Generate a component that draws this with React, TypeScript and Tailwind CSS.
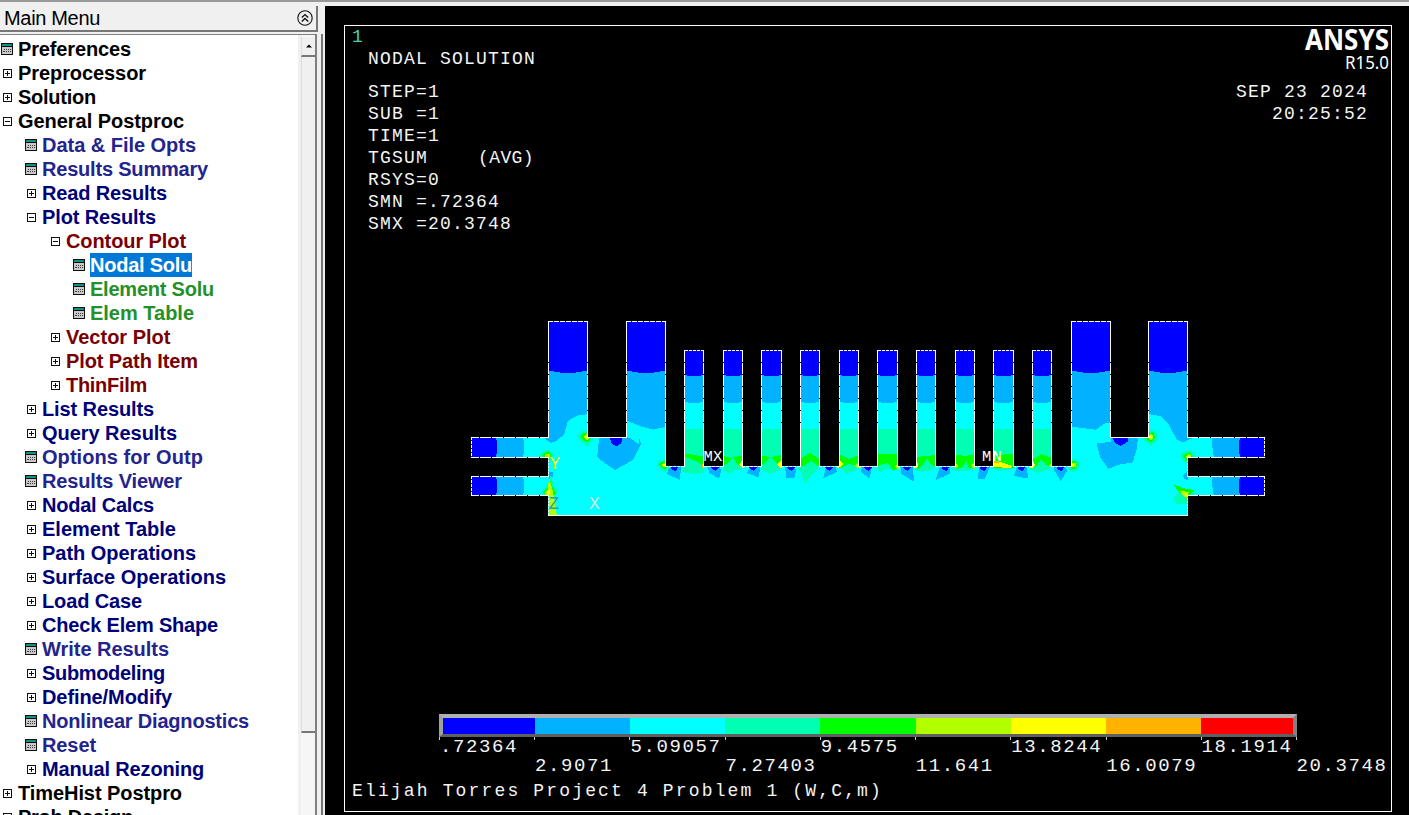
import React from "react";

type Kind = "page" | "plus" | "minus";
type Row = { d: number; k: Kind; t: string; c: string; w: number; sel?: boolean };

const BLACK = "text-black";
const NAVY = "text-[#000078]";
const INDIGO = "text-[#24248c]";
const MAROON = "text-[#780000]";
const GREEN = "text-[#24902a]";

const rows: Row[] = [
  { d: 0, k: "page", t: "Preferences", c: BLACK, w: 113 },
  { d: 0, k: "plus", t: "Preprocessor", c: BLACK, w: 128 },
  { d: 0, k: "plus", t: "Solution", c: BLACK, w: 78 },
  { d: 0, k: "minus", t: "General Postproc", c: BLACK, w: 166 },
  { d: 1, k: "page", t: "Data & File Opts", c: INDIGO, w: 154 },
  { d: 1, k: "page", t: "Results Summary", c: INDIGO, w: 166 },
  { d: 1, k: "plus", t: "Read Results", c: NAVY, w: 125 },
  { d: 1, k: "minus", t: "Plot Results", c: NAVY, w: 114 },
  { d: 2, k: "minus", t: "Contour Plot", c: MAROON, w: 120 },
  { d: 3, k: "page", t: "Nodal Solu", c: "text-white", w: 102, sel: true },
  { d: 3, k: "page", t: "Element Solu", c: GREEN, w: 124 },
  { d: 3, k: "page", t: "Elem Table", c: GREEN, w: 104 },
  { d: 2, k: "plus", t: "Vector Plot", c: MAROON, w: 104.5 },
  { d: 2, k: "plus", t: "Plot Path Item", c: MAROON, w: 132 },
  { d: 2, k: "plus", t: "ThinFilm", c: MAROON, w: 81 },
  { d: 1, k: "plus", t: "List Results", c: NAVY, w: 112 },
  { d: 1, k: "plus", t: "Query Results", c: NAVY, w: 135 },
  { d: 1, k: "page", t: "Options for Outp", c: INDIGO, w: 161 },
  { d: 1, k: "page", t: "Results Viewer", c: INDIGO, w: 140 },
  { d: 1, k: "plus", t: "Nodal Calcs", c: NAVY, w: 112 },
  { d: 1, k: "plus", t: "Element Table", c: NAVY, w: 134 },
  { d: 1, k: "plus", t: "Path Operations", c: NAVY, w: 154 },
  { d: 1, k: "plus", t: "Surface Operations", c: NAVY, w: 184 },
  { d: 1, k: "plus", t: "Load Case", c: NAVY, w: 100 },
  { d: 1, k: "plus", t: "Check Elem Shape", c: NAVY, w: 176 },
  { d: 1, k: "page", t: "Write Results", c: INDIGO, w: 127 },
  { d: 1, k: "plus", t: "Submodeling", c: NAVY, w: 123 },
  { d: 1, k: "plus", t: "Define/Modify", c: NAVY, w: 130 },
  { d: 1, k: "page", t: "Nonlinear Diagnostics", c: INDIGO, w: 207 },
  { d: 1, k: "page", t: "Reset", c: INDIGO, w: 54 },
  { d: 1, k: "plus", t: "Manual Rezoning", c: NAVY, w: 162 },
  { d: 0, k: "plus", t: "TimeHist Postpro", c: BLACK, w: 164 },
  { d: 0, k: "plus", t: "Prob Design", c: BLACK, w: 115 },
];

function NodeIcon({ kind }: { kind: Kind }) {
  if (kind === "page") {
    return (
      <svg width="12" height="12" viewBox="0 0 12 12" shapeRendering="crispEdges">
        <rect width="12" height="12" fill="#101010" />
        <rect x="1" y="1" width="10" height="2" fill="#109080" />
        <rect x="1" y="4" width="10" height="7" fill="#c8c8c8" />
        <path d="M3 6h1M5 6h1M7 6h1M9 6h1M2 8h2M5 8h1M7 8h1M9 8h1" transform="translate(0 .5)" stroke="#404040" />
      </svg>
    );
  }
  return (
    <svg width="9" height="9" viewBox="0 0 9 9" shapeRendering="crispEdges" className="ml-[2px]">
      <rect x=".5" y=".5" width="8" height="8" fill="#fff" stroke="#101010" />
      <path d={kind === "plus" ? "M2 4.5h5M4.5 2v5" : "M2 4.5h5"} stroke="#101010" />
    </svg>
  );
}

/* Text fitted to a known pixel width by spreading the difference over its letters. */
function FitText({ text, width, className }: { text: string; width: number; className: string }) {
  const ref = React.useRef<HTMLSpanElement>(null);
  const [space, setSpace] = React.useState(0);
  React.useLayoutEffect(() => {
    if (ref.current) {
      const natural = ref.current.getBoundingClientRect().width;
      setSpace((width - natural) / text.length);
    }
  }, [text, width]);
  return (
    <span ref={ref} className={className} style={{ letterSpacing: `${space}px` }}>
      {text}
    </span>
  );
}

const indent = ["pl-0", "pl-6", "pl-12", "pl-[72px]"];

function Sidebar() {
  return (
    <aside className="flex h-full w-[325px] shrink-0 flex-col bg-[#f0f0f0]">
      <div className="mr-[7px] flex h-[26px] shrink-0 items-center justify-between border-r-2 border-b-2 border-[#777] pr-[3px] pl-[4px]">
        <FitText text="Main Menu" width={96} className="text-[20px] leading-none whitespace-pre text-black" />
        <svg width="16" height="16" viewBox="0 0 16 16" fill="none" stroke="#111" strokeWidth="1.1">
          <circle cx="8" cy="8" r="7.2" />
          <path d="M4.8 7.6 8 4.6l3.2 3M4.8 11.4 8 8.4l3.2 3" strokeWidth="1.4" />
        </svg>
      </div>
      <div className="flex min-h-0 flex-1 pt-[2px]">
        <div className="flex min-h-0 w-[317px] shrink-0 overflow-hidden border-t border-r-2 border-[#808080] bg-white">
          <ul className="w-[298px] shrink-0 pt-[2px]">
            {rows.map((r) => (
              <li key={r.t} className={`flex h-6 items-center ${indent[r.d]}`}>
                <span className="flex w-[18px] shrink-0 items-center pl-px">
                  <NodeIcon kind={r.k} />
                </span>
                <span className={`flex h-6 items-center ${r.sel ? "bg-[#0078d7]" : ""}`}>
                  <FitText text={r.t} width={r.w} className={`text-[20px] leading-6 font-bold whitespace-pre ${r.c}`} />
                </span>
              </li>
            ))}
          </ul>
          <div className="flex w-[17px] shrink-0 flex-col border-l-[3px] border-[#f0f0f0] bg-[#f6f6f6] pt-[2px]">
            <div className="flex h-5 shrink-0 items-center justify-center border-b-2 border-l border-b-[#777] border-l-[#ddd] bg-[#f0f0f0]">
              <svg width="6" height="4" viewBox="0 0 6 4">
                <path d="M0 3.5 3 .5l3 3z" fill="#000" />
              </svg>
            </div>
            <div className="h-[676px] shrink-0 border-b-2 border-l border-b-[#777] border-l-[#ddd] bg-[#f0f0f0]" />
          </div>
        </div>
        <div className="ml-[4px] w-[4px] border-l-2 border-[#777] bg-[#f0f0f0]" />
      </div>
    </aside>
  );
}

const B = "#0000ff";
const L = "#00b2ff";
const C = "#00ffff";
const A = "#00ffb2";
const G = "#00ff00";
const YG = "#b2ff00";
const Y = "#ffff00";
const O = "#ffb200";
const R = "#ff0000";

const smallFins: [number, number][] = [
  [684.5, 703.5], [723.5, 742.5], [761.5, 781.5], [800.5, 819.5], [839.5, 858.5],
  [877.5, 897.5], [916.5, 935.5], [955.5, 974.5], [993.5, 1013.5], [1032.5, 1051.5],
];
const bigFins: [number, number][] = [
  [548.5, 587.5], [626.5, 665.5], [1071.5, 1110.5], [1148.5, 1187.5],
];

const outline =
  "M548.5 321.5H587.5V437.5H626.5V321.5H665.5V466.5" +
  smallFins.map(([a, b]) => `H${a}V350.5H${b}V466.5`).join("") +
  "H1071.5V321.5H1110.5V437.5H1148.5V321.5H1187.5V437.5H1264.5V457.5H1187.5V476.5H1264.5V495.5H1187.5V515.5H548.5V495.5H471.5V476.5H548.5V457.5H471.5V437.5H548.5Z";

const coldPockets = [
  "669,467 667,474 680,480 681,467",
  "708,467 709,473 719,478.5 721,471 720,467",
  "750,467 747,473 759,477.5 760,467",
  "785,467 786.5,477.5 794,478.5 796,471 795,467",
  "826,467 823,478.5 837,472 836,467",
  "862,467 861,472 869.5,478.5 872,467",
  "901,467 901.5,474 914.5,482 912.5,467",
  "940,467 935.5,480 950.5,473.5 950,467",
  "979,467 978,479 985,478.5 990,467",
  "1017,467 1014,476 1028,478.5 1027,467",
  "1054,467 1054,470 1060.7,481 1067,471 1066,467",
];
const coldCores = [674.5, 715, 753, 791, 829, 868, 907, 945.5, 983.5, 1021.5, 1060.5];

const finFeet = [
  "684,464 703,464 704,473 692,474 682,472",
  "723,464 743,464 742,469 735,470 730,474 723,470",
  "761,464 782,464 780,470 770,474 762,470",
  "800,464 820,464 818,468 811,476 805,484 801,472 798,470",
  "839,464 859,464 856,470 847,474 841,469",
  "877,464 898,464 895,471 888,468 879,473",
  "916,464 936,464 932,470 923,472 914,470",
  "955,464 975,464 973,470 962,471 953,470",
  "993,464 1014,464 1013,469 1000,471 993,468",
  "1032,464 1052,464 1049,469 1039,473 1030,470",
];
const finGreens = [
  "684,453.5 703.5,456.5 703.5,467 700,463 684,456",
  "723,456 731,458 742.5,455 742.5,467 738,465 733,457.5 726,464 723,466",
  "761,456 772,457 781.5,455 781.5,467 776,463 770,457 764,464 761,466",
  "800,459 810,453 820,459 820,467 811,461 804,466 800,467",
  "839,454 849,459 859,455 859,467 849,464 843,467 839,468",
  "877,453.5 898,454 898,468 893,471 888,463 877,466",
  "916,457 926,456 936,455 936,467 930,464 927,458 923,465 918,469 916,468",
  "955,455 966,456 975,454 975,467 969,468 966,461 963,467 955,469",
  "993,455 1014,454 1014,468 993,468",
  "1032,460 1041,454 1052,458 1052,467 1045,464 1041,459 1037,466 1032,468",
];

/* Stress concentration at a re-entrant corner, drawn as nested contour bands. */
function Hot({ x, y, s = 1, top = Y }: { x: number; y: number; s?: number; top?: string }) {
  return (
    <g transform={`translate(${x} ${y}) scale(${s})`}>
      <polygon points="-9,-1 -4,-6 3,-7 8,-2 7,3 1,9 -5,5" fill={A} />
      <polygon points="-6,-1 -2,-4 3,-5 5,0 2,5 -2,4" fill={G} />
      <polygon points="-3,0 0,-3 3,-2 3,2 0,3" fill={YG} />
      <rect x="-1.5" y="-1.5" width="3" height="3" fill={top} />
    </g>
  );
}

function ContourPlot() {
  return (
    <svg width="820" height="215" viewBox="460 310 820 215" shapeRendering="crispEdges" className="block">
      <defs>
        <clipPath id="body">
          <path d={outline} />
        </clipPath>
      </defs>
      <path d={outline} fill={C} />
      <g clipPath="url(#body)">
        <polygon fill={L} points="548,321 588,321 588,414 577,415.7 567.7,421 564.3,434 556.7,441 551,443 544,438 548,437" />
        <polygon fill={L} points="626,321 666,321 666,426.7 653.3,429.7 641.7,426.7 626,420.5" />
        <polygon fill={L} points="1071,321 1111,321 1111,422 1104,423.7 1096,429.7 1071,426.7" />
        <polygon fill={L} points="1148,321 1188,321 1188,437 1191.7,438.5 1183.3,442.3 1177.3,440 1173.3,433.3 1168.3,424 1160,416 1148,414" />
        {bigFins.map(([a, b]) => (
          <path key={a} d={`M${a} 321H${b}V370.5Q${(a + b) / 2} 375.5 ${a} 370.5Z`} fill={B} />
        ))}
        {smallFins.map(([a, b], i) => (
          <g key={a}>
            <polygon points={finFeet[i]} fill={A} />
            <rect x={a} y="429" width={b - a} height="37.5" fill={A} />
            <path d={`M${a} 350H${b}V402L${b - 5} 402.8H${a + 5}L${a} 402Z`} fill={L} />
            <path d={`M${a} 350H${b}V375L${b - 5} 376H${a + 5}L${a} 375Z`} fill={B} />
            <polygon points={finGreens[i]} fill={G} />
          </g>
        ))}
        {[437, 476].map((y) => (
          <g key={y}>
            <path d={`M471 ${y}H523Q525 ${y + 10} 523 ${y + 21}H471Z`} fill={L} />
            <path d={`M471 ${y}H496Q498 ${y + 10} 496 ${y + 21}H471Z`} fill={B} />
            <path d={`M1265 ${y}H1212Q1212 ${y + 12} 1214 ${y + 21}H1265Z`} fill={L} />
            <path d={`M1265 ${y}H1240Q1238 ${y + 10} 1240 ${y + 21}H1265Z`} fill={B} />
          </g>
        ))}
        <polygon fill={L} points="599,437 598,451 597,457 606,464 615,470 633,460 641,444 639.5,439 638.5,444 630,438 626,437" />
        <polygon fill={B} points="609.7,437 611.7,444 616.7,446 621.3,443.3 622.7,437" />
        <polygon fill={L} points="1096.7,443.3 1111,442 1111,437 1137.7,437 1137.3,447 1132.7,462.3 1120,464.5 1108.3,468.7 1100,457" />
        <polygon fill={B} points="1112.7,437 1114.3,442.3 1120.7,446 1127.7,441.7 1128.7,437" />
        {coldPockets.map((p) => (
          <polygon key={p} points={p} fill={L} />
        ))}
        {coldCores.map((x) => (
          <polygon key={x} points={`${x - 4},467 ${x - 2},470 ${x + 1},471 ${x + 4},467`} fill={B} />
        ))}
        <polygon fill={L} points="548,472 553,472 553,476 549,480" />
        <polygon fill={L} points="1188,471 1183,475 1184,479 1188,480" />

        <Hot x={586} y={437} />
        <Hot x={1150} y={437} />
        <Hot x={547} y={456} s={0.85} top={O} />
        <Hot x={1188} y={457} s={0.9} />
        <Hot x={664} y={465} s={0.85} />
        <Hot x={1073} y={465} s={0.85} />
        <polygon fill={A} points="541,492 548,484 551,475 554,486 558,491 554,499 550,501" />
        <polygon fill={G} points="543,493 548,487 550,480 553,488 556,493 552,497" />
        <polygon fill={YG} points="545,493 548,489 549,477 552,488 554,497 557,516 548,516" />
        <polygon fill={Y} points="547,491 550,489 550,494 547,495" />
        <polygon fill={A} points="1173,484 1188,490 1195,490 1190,504 1178,504 1172,499 1178,493" />
        <polygon fill={G} points="1174,485 1187,489 1194,490 1187,499 1179,492" />
        <polygon fill={YG} points="1180,491 1189,492 1187,498 1183,496" />
        <rect x="1185" y="493" width="3" height="3" fill={Y} />

        <rect x="702" y="464" width="2" height="4" fill={O} />
        <polygon points="742.5,460 739,465 742,468 746,467" fill={Y} />
        <polygon points="781.5,460 777,464 780,468 784,467" fill={Y} />
        <polygon points="839.5,460 843,464 841,467 837,468" fill={Y} />
        <polygon points="858.5,462 855,466 857,468 861,468" fill={YG} />
        <polygon points="897.5,463 895,467 897,469 900,468" fill={YG} />
        <polygon points="916.5,461 918.5,465 917,468 914,468" fill={Y} />
        <polygon points="955.5,462 958,466 955,469" fill={YG} />
        <polygon points="974.5,462 971,466 975,469" fill={YG} />
        <polygon points="993,460 1001,462 1012,466 1011,468 993,467" fill={Y} />
        <polygon points="993,460 997,461 999,463 993,463" fill={O} />
        <polygon points="1032.5,460 1035,465 1032,468 1029,468" fill={Y} />
        <polygon points="1051.5,462 1049,466 1052,468" fill={YG} />
      </g>
      <path d={outline} fill="none" stroke="#fff" strokeWidth="1" />
      <g stroke="#222" strokeWidth="1" strokeDasharray="1 3">
        {smallFins.map(([a, b]) => (
          <path key={a} d={`M${a + 3} 350.5H${b - 1}`} />
        ))}
        {bigFins.map(([a, b]) => (
          <path key={a} strokeDasharray="1 5" d={`M${a + 4} 321.5H${b - 1}`} />
        ))}
        <path d="M471.5 440V457M471.5 479V495M1264.5 440V457M1264.5 479V495" />
      </g>
      <g stroke="#003" strokeWidth="1" strokeDasharray="1 11">
        {[...bigFins, ...smallFins].map(([a, b]) => (
          <path key={a} d={`M${a} 362V428M${b} 362V428`} />
        ))}
        <path d="M479 437.5H545M479 457.5H545M479 476.5H545M479 495.5H545M1198 437.5H1262M1198 457.5H1262M1198 476.5H1262M1198 495.5H1262" />
      </g>
      <g stroke={C} strokeWidth="1">
        <path d="M548.5 459V475M548.5 497V514M1187.5 459V475M1187.5 497V514" strokeDasharray="1 2" />
        <path d="M668 466.5H683M707 466.5H722M745 466.5H760M784 466.5H799M822 466.5H838M861 466.5H876M900 466.5H915M938 466.5H954M977 466.5H992M1016 466.5H1031M1054 466.5H1070" strokeDasharray="1 3" />
      </g>
      <g fontFamily="'Liberation Mono', monospace" fontSize="15.5" fill="#fff">
        <text x="703.5" y="461" textLength="20">MX</text>
        <text x="982" y="461" textLength="21">MN</text>
        <text x="549.5" y="469" fontSize="18" fill={Y}>Y</text>
        <text x="548.5" y="509" fontSize="18" fill="#20a0b0">Z</text>
        <text x="589" y="509" fontSize="18" fill="#d8e8e8">X</text>
      </g>
    </svg>
  );
}

const scale = [B, L, C, A, G, YG, Y, O, R];
const upper = [".72364", "5.09057", "9.4575", "13.8244", "18.1914"];
const lower = ["2.9071", "7.27403", "11.641", "16.0079", "20.3748"];

function Legend() {
  return (
    <div className="ml-[94px] w-[858px] text-[19px] leading-[19px] tracking-[1.6px] text-[#f4f4f4]">
      <div className="flex h-[23px] border-4 border-t-[#b0b0b0] border-r-[#808080] border-b-[#606060] border-l-[#a0a0a0] border-b-[3px]">
        {scale.map((c, i) => (
          <div key={c} className={i === 0 || i === 8 ? "w-[92px]" : "flex-1"} style={{ backgroundColor: c }} />
        ))}
      </div>
      <div className="flex h-[3px] justify-between">
        {[...scale, "end"].map((c) => (
          <div key={c} className="w-px bg-[#ccc]" />
        ))}
      </div>
      <div className="-mt-[2px] ml-px flex">
        {upper.map((t) => (
          <span key={t} className="w-[190.4px] shrink-0">{t}</span>
        ))}
      </div>
      <div className="ml-[96px] flex">
        {lower.map((t) => (
          <span key={t} className="w-[190.4px] shrink-0">{t}</span>
        ))}
      </div>
    </div>
  );
}

function Graphics() {
  return (
    <main className="min-w-0 flex-1 bg-black pt-[19px] pl-[19px]">
      <div className="flex h-[787px] w-[1048px] flex-col border border-white font-['Liberation_Mono',monospace] text-[18px] leading-[22px] tracking-[1.2px] whitespace-pre text-[#f4f4f4]">
        <div className="flex h-[284px] shrink-0 justify-between">
          <div className="pl-[7px]">
            <div className="text-[#40d8b0]">1</div>
            <div className="pl-[16px]">
              <div>NODAL SOLUTION</div>
              <div className="pt-[11px]">STEP=1</div>
              <div>SUB =1</div>
              <div>TIME=1</div>
              <div className="flex"><span className="w-[110px]">TGSUM</span><span className="tracking-[0.4px]">(AVG)</span></div>
              <div>RSYS=0</div>
              <div>SMN =.72364</div>
              <div>SMX =20.3748</div>
            </div>
          </div>
          <div className="flex flex-col items-end">
            <div className="flex h-[55px] flex-col items-end pr-px tracking-normal">
              <svg width="90" height="28" viewBox="0 0 90 28" fill="#fff" fontFamily="'Noto Sans', 'Open Sans', sans-serif" overflow="visible">
                <text x="5" y="24" fontSize="28.5" fontWeight="700" textLength="84" lengthAdjust="spacingAndGlyphs">ANSYS</text>
              </svg>
              <svg width="90" height="24" viewBox="0 0 90 24" fill="#fff" fontFamily="'Noto Sans', 'Open Sans', sans-serif" overflow="visible">
                <text x="45" y="15" fontSize="17.5" textLength="44" lengthAdjust="spacingAndGlyphs">R15.0</text>
              </svg>
            </div>
            <div className="pr-[23px]">SEP 23 2024</div>
            <div className="pr-[23px]">20:25:52</div>
          </div>
        </div>
        <div className="pl-[115px]">
          <ContourPlot />
        </div>
        <div className="h-[189px] shrink-0" />
        <Legend />
        <div className="mt-[4px] pl-[7px] tracking-[2.15px]">Elijah Torres Project 4 Problem 1 (W,C,m)</div>
      </div>
    </main>
  );
}

export default function App() {
  return (
    <div className="flex h-[815px] w-[1409px] flex-col overflow-hidden bg-[#f0f0f0] font-['Liberation_Sans',Arial,sans-serif]">
      <div className="h-[6px] shrink-0 border-t-2 border-[#999] bg-[#f0f0f0]" />
      <div className="flex min-h-0 flex-1">
        <Sidebar />
        <Graphics />
      </div>
    </div>
  );
}
